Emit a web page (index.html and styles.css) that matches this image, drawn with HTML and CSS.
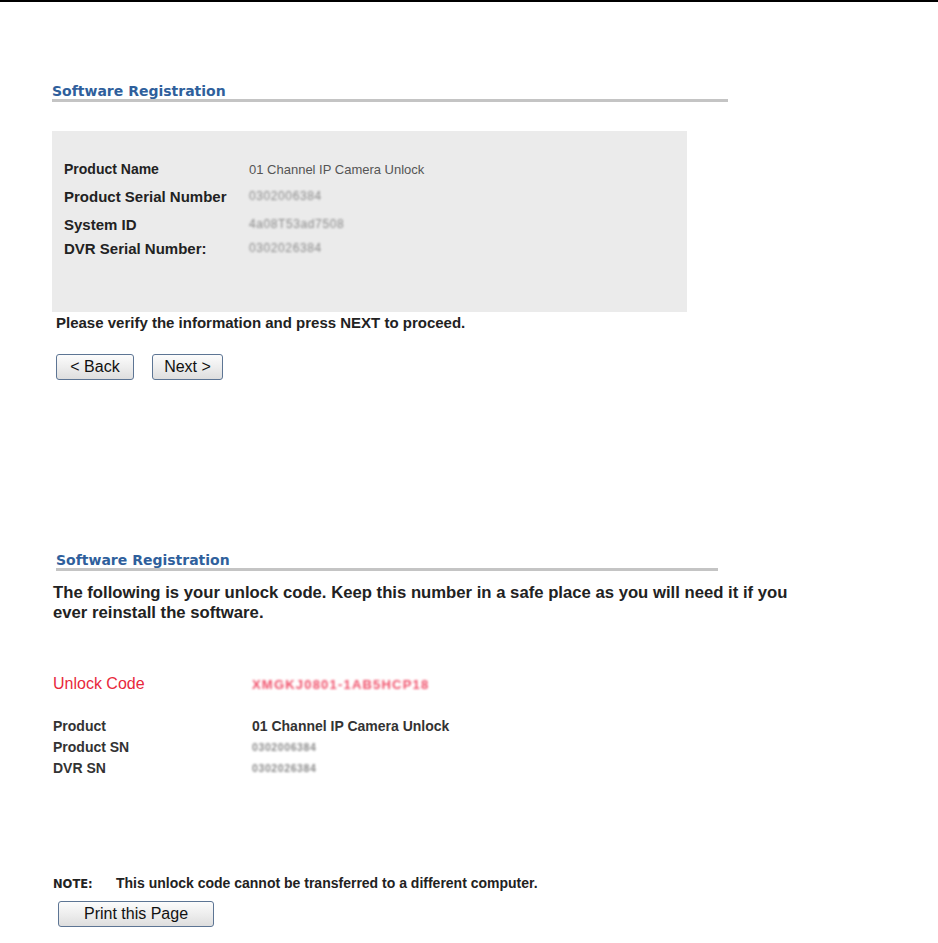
FILE: index.html
```html
<!DOCTYPE html>
<html lang="en">
<head>
    <meta charset="UTF-8">
    <title>Software Registration</title>
    <link rel="stylesheet" href="styles.css">
</head>
<body>

    <!-- Step 1: verify -->
    <div class="step step-verify">
        <div class="reg-title title-wide">Software Registration</div>

        <div class="info-box">
            <div class="info-row row-small">
                <span class="info-label">Product Name</span>
                <span class="info-value">01 Channel IP Camera Unlock</span>
            </div>
            <div class="info-row">
                <span class="info-label">Product Serial Number</span>
                <span class="info-value blurred">0302006384</span>
            </div>
            <div class="info-row">
                <span class="info-label">System ID</span>
                <span class="info-value blurred">4a08T53ad7508</span>
            </div>
            <div class="info-row row-last">
                <span class="info-label">DVR Serial Number:</span>
                <span class="info-value blurred">0302026384</span>
            </div>
        </div>

        <p class="verify-text">Please verify the information and press NEXT to proceed.</p>

        <div class="btn-row">
            <button class="btn btn-back">&lt; Back</button>
            <button class="btn btn-next">Next &gt;</button>
        </div>
    </div>

    <!-- Step 2: unlock code -->
    <div class="step step-code">
        <div class="reg-title title-narrow">Software Registration</div>

        <p class="code-intro">The following is your unlock code. Keep this number in a safe place as you will need it if you ever reinstall the software.</p>

        <div class="code-row">
            <span class="code-label">Unlock Code</span>
            <span class="code-value">XMGKJ0801-1AB5HCP18</span>
        </div>

        <div class="detail-list">
            <div class="detail-row">
                <span class="detail-label">Product</span>
                <span class="detail-value">01 Channel IP Camera Unlock</span>
            </div>
            <div class="detail-row">
                <span class="detail-label">Product SN</span>
                <span class="detail-value blurred-sm">0302006384</span>
            </div>
            <div class="detail-row">
                <span class="detail-label">DVR SN</span>
                <span class="detail-value blurred-sm">0302026384</span>
            </div>
        </div>

        <p class="note"><span class="note-tag">NOTE:</span>This unlock code cannot be transferred to a different computer.</p>

        <button class="btn btn-print">Print this Page</button>
    </div>

</body>
</html>
```

FILE: styles.css
```css
* {
    margin: 0;
    padding: 0;
    box-sizing: border-box;
}

body {
    background: #fff;
    border-top: 2px solid #000;
    font-family: "Liberation Sans", Arial, sans-serif;
    color: #222;
}

/* Section headings */
.reg-title {
    font-family: "DejaVu Sans", Verdana, sans-serif;
    font-size: 14px;
    font-weight: bold;
    color: #2f5f9c;
    line-height: 16px;
    border-bottom: 3px solid #c4c4c4;
}

.step-verify {
    padding-left: 52px;
    padding-top: 81px;
}

.title-wide {
    width: 676px;
}

/* Grey info panel */
.info-box {
    margin-top: 29px;
    width: 635px;
    height: 181px;
    background: #ebebeb;
    padding: 25px 0 0 12px;
}

.info-row {
    display: flex;
    align-items: center;
    height: 28px;
}

.row-small {
    height: 26px;
}

.row-last {
    height: 20px;
}

.info-label {
    width: 185px;
    font-size: 15px;
    font-weight: bold;
    color: #222;
}

.row-small .info-label {
    font-size: 14px;
}

.info-value {
    font-size: 13px;
    color: #555;
}

.blurred {
    color: #8a8a8a;
    font-size: 12px;
    filter: blur(1px);
    letter-spacing: 0.6px;
}

.verify-text {
    margin: 3px 0 0 4px;
    font-size: 15px;
    font-weight: bold;
    line-height: 16px;
}

/* Buttons */
.btn-row {
    display: flex;
    gap: 18px;
    margin: 23px 0 0 4px;
}

.btn {
    height: 26px;
    font-family: "Liberation Sans", Arial, sans-serif;
    font-size: 16px;
    color: #111;
    background: linear-gradient(#fcfcfc, #ececec 55%, #dedede);
    border: 1px solid #5d7594;
    border-radius: 3px;
}

.btn-back {
    width: 78px;
}

.btn-next {
    width: 71px;
}

/* Step 2 */
.step-code {
    padding-left: 53px;
    margin-top: 172px;
}

.title-narrow {
    width: 662px;
    margin-left: 3px;
}

.code-intro {
    margin-top: 12px;
    width: 745px;
    font-size: 16.7px;
    font-weight: bold;
    line-height: 20px;
    color: #222;
}

.code-row {
    display: flex;
    align-items: center;
    margin-top: 51px;
    height: 20px;
}

.code-label {
    width: 199px;
    font-size: 16px;
    color: #e8283c;
}

.code-value {
    font-size: 13px;
    font-weight: bold;
    color: #f0506a;
    filter: blur(1.1px);
    letter-spacing: 1.2px;
}

.detail-list {
    margin-top: 21px;
}

.detail-row {
    display: flex;
    align-items: center;
    height: 21px;
}

.detail-label {
    width: 199px;
    font-size: 14px;
    font-weight: bold;
    color: #333;
}

.detail-value {
    font-size: 14px;
    font-weight: bold;
    color: #333;
}

.blurred-sm {
    font-size: 10.5px;
    color: #8a8a8a;
    filter: blur(0.9px);
    letter-spacing: 0.6px;
}

.note {
    margin-top: 97px;
    font-size: 14px;
    font-weight: bold;
    line-height: 16px;
    color: #222;
}

.note-tag {
    display: inline-block;
    width: 63px;
    font-family: "DejaVu Sans", Verdana, sans-serif;
    font-size: 11.5px;
}

.btn-print {
    width: 156px;
    margin: 9px 0 0 5px;
}
```
